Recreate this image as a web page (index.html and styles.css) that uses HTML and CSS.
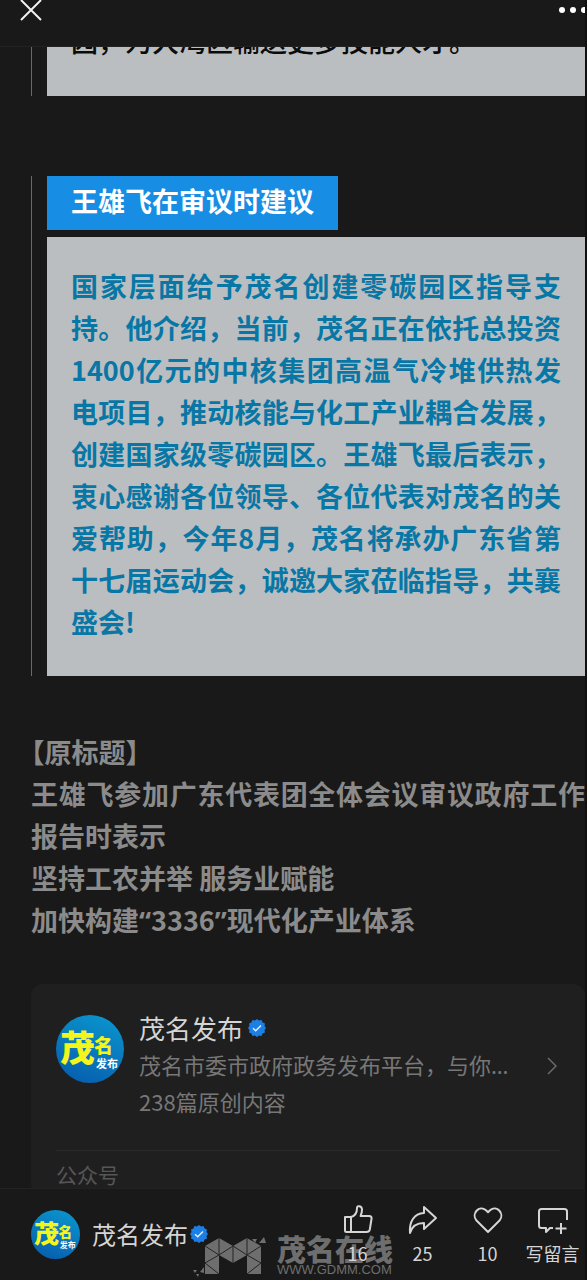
FILE: index.html
```html
<!DOCTYPE html>
<html lang="zh-CN">
<head>
<meta charset="utf-8">
<meta name="viewport" content="width=device-width, initial-scale=1">
<title>茂名发布</title>
<link rel="stylesheet" href="styles.css">
</head>
<body>
<svg class="defs" aria-hidden="true">
  <defs>
    <linearGradient id="sea" x1="0.7" y1="0" x2="0.3" y2="1">
      <stop offset="0" stop-color="#0a93cc"/>
      <stop offset="1" stop-color="#075fae"/>
    </linearGradient>
    <symbol id="avatar" viewBox="0 0 68 68">
      <circle cx="34" cy="34" r="34" fill="url(#sea)"/>
      <text class="logo-yellow" x="4" y="46" font-size="35">茂</text>
      <text class="logo-yellow" x="38" y="38" font-size="19">名</text>
      <text class="logo-white" x="40" y="53" font-size="11">发布</text>
    </symbol>
    <symbol id="verified" viewBox="0 0 18 18">
      <path fill="#1c7fe6" d="M9 0l2 1.6 2.6-.5 1 2.4 2.4 1-.5 2.5L18 9l-1.5 2 .5 2.5-2.4 1-1 2.4-2.6-.5L9 18l-2-1.6-2.6.5-1-2.4-2.4-1 .5-2.5L0 9l1.5-2L1 4.500l2.400-1 1-2.400 2.600.5z"/>
      <path fill="none" stroke="#e6f1ff" stroke-width="1.400" d="M5 9.200l2.700 2.600L13 6.600"/>
    </symbol>
  </defs>
</svg>
<div class="page">
  <header class="topbar">
    <button class="icon-button" aria-label="关闭"><svg width="22" height="22" viewBox="0 0 22 22"><path d="M1 1l20 20M21 1L1 21" stroke="#f2f2f2" stroke-width="2" fill="none"/></svg></button>
    <button class="icon-button" aria-label="更多"><svg width="26" height="6" viewBox="0 0 26 6" fill="#fff"><circle cx="3" cy="3" r="3"/><circle cx="14" cy="3" r="3"/><circle cx="25" cy="3" r="3"/></svg></button>
  </header>

  <main class="viewport">
    <article class="article">
      <section class="quote quote-previous">
        <p class="panel panel-dark">园，为大湾区输送更多技能人才。</p>
      </section>
      <section class="quote">
        <h2 class="quote-title">王雄飞在审议时建议</h2>
        <p class="panel panel-blue">国家层面给予茂名创建零碳园区指导支持。他介绍，当前，茂名正在依托总投资1400亿元的中核集团高温气冷堆供热发电项目，推动核能与化工产业耦合发展，创建国家级零碳园区。王雄飞最后表示，衷心感谢各位领导、各位代表对茂名的关爱帮助，今年8月，茂名将承办广东省第十七届运动会，诚邀大家莅临指导，共襄盛会!</p>
      </section>
      <section class="original">
        <p>【原标题】</p>
        <p>王雄飞参加广东代表团全体会议审议政府工作报告时表示</p>
        <p>坚持工农并举 服务业赋能</p>
        <p>加快构建<span class="mark">“</span>3336<span class="mark">”</span>现代化产业体系</p>
      </section>
      <a class="card" href="#account">
        <span class="card-main">
          <svg class="card-avatar" role="img" aria-label="茂名发布"><use href="#avatar"/></svg>
          <span class="card-text">
            <span class="card-name">茂名发布<svg class="badge" aria-hidden="true"><use href="#verified"/></svg></span>
            <span class="card-line">茂名市委市政府政务发布平台，与你<span class="mark">…</span></span>
            <span class="card-line">238篇原创内容</span>
          </span>
          <svg class="chevron" viewBox="0 0 10 18" aria-hidden="true"><path d="M1 1l8 8-8 8" fill="none" stroke="#6b6b6b" stroke-width="1.500"/></svg>
        </span>
        <span class="card-type">公众号</span>
      </a>
    </article>
  </main>

  <footer class="bottombar">
    <div class="watermark">
      <svg class="watermark-logo" viewBox="0 0 76 40" aria-hidden="true">
        <path fill="#6e6e6e" d="M12 9L26 1 40 9 54 1 68 9V37H54V18L40 26 26 18V37H12Z"/>
        <path fill="#6e6e6e" d="M59 2h5l-2 4zM66 6l5-6 2 6zM0 33h4l-2 3zM7 35l4-5v6zM3 37h3l-1 3z"/>
        <path fill="none" stroke="#242424" stroke-width="1" d="M12 9l14 9 14-9 14 9 14-9M26 1v17M54 1v17M40 9v17M26 18l-14 8 14 11M54 18l14 8-14 11"/>
      </svg>
      <span class="watermark-text"><span class="watermark-name">茂名在线</span><span class="watermark-url">WWW.GDMM.COM</span></span>
    </div>
    <a class="account" href="#account">
      <svg class="account-avatar" role="img" aria-label="茂名发布"><use href="#avatar"/></svg>
      <span class="account-name">茂名发布<svg class="badge" aria-hidden="true"><use href="#verified"/></svg></span>
    </a>
    <div class="actions">
      <button class="action"><svg class="action-icon" viewBox="0 0 30 30"><path d="M2 12h6v15H3.500Q2 27 2 25.500zM8 12c4-1 6-4 6-9 0-3 5-2 5 1.500 0 3-.6 4.500-1.400 6.500H26q3 0 2.500 3l-1.700 10.500Q26.200 27 23.500 27H8"/></svg><span>16</span></button>
      <button class="action"><svg class="action-icon" viewBox="0 0 30 30"><path d="M16 2l12 11-12 11v-6C9 18 4 21 2 28 1 17 6 8.500 16 8z"/></svg><span>25</span></button>
      <button class="action"><svg class="action-icon" viewBox="0 0 30 30"><path d="M15 27L3.500 15.500C-2 9 6-.5 13 5.200l2 2 2-2C24-.5 32 9 26.500 15.500z"/></svg><span>10</span></button>
      <button class="action"><svg class="action-icon" viewBox="0 0 30 30"><path d="M29 15V6.500Q29 4 26.500 4h-23Q1 4 1 6.500v14Q1 23 3.500 23H8v4l4-4h3M23 18v11M17.500 23.500h11"/></svg><span>写留言</span></button>
    </div>
  </footer>
</div>
</body>
</html>
```
FILE: styles.css
```css
* {
  box-sizing: border-box;
}

body {
  margin: 0;
  background: #191919;
  font-family: "Noto Sans CJK SC", sans-serif;
}

p,
h2 {
  margin: 0;
}

button {
  padding: 0;
  border: 0;
  background: none;
  color: inherit;
  font: inherit;
}

a {
  color: inherit;
  text-decoration: none;
}

svg {
  flex: none;
}

.defs {
  position: absolute;
  width: 0;
  height: 0;
}

.page {
  display: flex;
  flex-direction: column;
  height: 100vh;
  border-right: 2px solid #101010;
}

.topbar {
  display: flex;
  flex: none;
  justify-content: space-between;
  align-items: flex-start;
  height: 47px;
  padding-left: 20px;
  border-bottom: 1px solid #222;
}

.icon-button {
  display: flex;
  align-items: center;
  height: 20px;
}

.viewport {
  flex: 1;
  min-height: 0;
  overflow: hidden;
}

.article {
  margin-top: -27px;
  padding-left: 31px;
  font-size: 27px;
  line-height: 42px;
}

.quote {
  padding-left: 15px;
  border-left: 1px solid #1a7fd0;
}

.quote-previous {
  margin-bottom: 80px;
}

.quote-title {
  width: fit-content;
  margin-bottom: 7px;
  padding: 4px 24px 8px;
  background: #188de4;
  color: #fff;
  font-size: 27px;
  font-weight: 700;
}

.panel {
  padding: 28px 24px 33px;
  background: #babec1;
  text-align: justify;
}

.panel-dark {
  padding-top: 0;
  padding-bottom: 34px;
  color: #0b0b0b;
  font-weight: 500;
}

.panel-blue {
  color: #0877a5;
  font-weight: 700;
}

.original {
  margin: 55px 0 42px;
  color: #8b8b8b;
  font-weight: 700;
  text-align: justify;
  text-spacing-trim: trim-start;
}

.mark {
  font-family: "Noto Sans", sans-serif;
}

.card {
  display: block;
  padding: 25px 25px 0;
  border-radius: 12px;
  background: #1f1f1f;
}

.card-main {
  display: flex;
  align-items: center;
  padding-bottom: 31px;
  border-bottom: 1px solid #2a2a2a;
}

.card-avatar {
  align-self: flex-start;
  width: 68px;
  height: 68px;
  margin: 6px 15px 0 0;
}

.card-text {
  display: flex;
  flex: 1;
  flex-direction: column;
  min-width: 0;
}

.card-name {
  display: flex;
  gap: 5px;
  align-items: center;
  height: 37px;
  color: #d5d5d5;
  font-size: 26px;
}

.badge {
  width: 18px;
  height: 18px;
}

.card-line {
  overflow: hidden;
  color: #777;
  font-size: 22px;
  line-height: 36px;
  white-space: nowrap;
}

.chevron {
  width: 10px;
  height: 18px;
  margin: 4px 3px 0 0;
}

.card-type {
  display: block;
  padding-top: 2px;
  color: #565656;
  font-size: 21px;
}

.bottombar {
  position: relative;
  display: flex;
  flex: none;
  justify-content: space-between;
  height: 92px;
  padding-left: 31px;
  border-top: 1px solid #222;
  background: #191919;
  color: #d5d5d5;
}

.account {
  display: flex;
  gap: 12px;
  align-items: center;
}

.account-avatar {
  width: 49px;
  height: 49px;
}

.account-name {
  display: flex;
  gap: 2px;
  align-items: center;
  padding-bottom: 2px;
  font-size: 24px;
}

.actions {
  position: relative;
  display: grid;
  grid-template-columns: repeat(4, 65px);
}

.action {
  display: flex;
  flex-direction: column;
  gap: 5px;
  align-items: center;
  padding-top: 16px;
  font-size: 18px;
  line-height: 26px;
  white-space: nowrap;
}

.action-icon {
  width: 30px;
  height: 30px;
  fill: none;
  stroke: #d5d5d5;
  stroke-width: 2;
  stroke-linejoin: round;
}

.watermark {
  position: absolute;
  bottom: 3px;
  left: 193px;
  display: flex;
  gap: 8px;
  align-items: flex-end;
  color: #6e6e6e;
}

.watermark-logo {
  width: 76px;
  height: 40px;
}

.watermark-text {
  display: flex;
  flex-direction: column;
  gap: 2px;
}

.watermark-name {
  font-size: 29px;
  font-weight: 900;
  line-height: 26px;
}

.watermark-url {
  font-family: "Liberation Sans", sans-serif;
  font-size: 13px;
  line-height: 14px;
}

.logo-yellow {
  fill: #f4f51c;
  font-weight: 900;
}

.logo-white {
  fill: #fff;
  font-weight: 700;
}
```
